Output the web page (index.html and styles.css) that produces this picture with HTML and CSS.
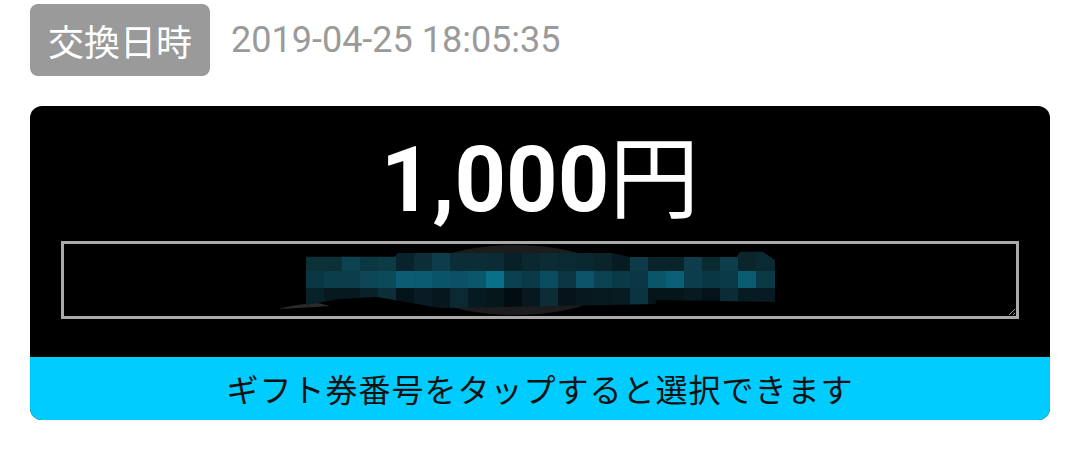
FILE: index.html
```html
<!DOCTYPE html>
<html lang="ja">
<head>
<meta charset="utf-8">
<title>ギフト券</title>
<link rel="stylesheet" href="styles.css">
</head>
<body>
<div class="page">
  <div class="meta">
    <span class="tag">交換日時</span>
    <span class="date">2019-04-25 18:05:35</span>
  </div>
  <div class="card">
    <div class="amount">1,000<span class="yen">円</span></div>
    <div class="code-box">
      <svg class="mosaic" viewBox="64 244 952 72" width="952" height="72" xmlns="http://www.w3.org/2000/svg">
        <defs>
          <clipPath id="blob">
            <polygon points="306,256.7 395,256.7 398,253 612,253 630,257 737,257 740,251.7 763,251.7 775,260 775,302 657,300 655,304 610,305 440,308 377,297 340,299 306,305"/>
          </clipPath>
        </defs>
        <ellipse cx="515" cy="280" rx="100" ry="35" fill="#1c1c1c"/>
        <path d="M278 309 Q296 304 318 303 L330 306 Q300 308 278 309 Z" fill="#2a2a2a"/>
        <g clip-path="url(#blob)" shape-rendering="crispEdges">
          <g transform="translate(306 0) scale(18 1)">
            <rect x="0" y="248" width="1.05" height="22.7" fill="#0b3038"/>
            <rect x="1" y="248" width="1.05" height="22.7" fill="#0b3038"/>
            <rect x="2" y="248" width="1.05" height="22.7" fill="#0d4250"/>
            <rect x="3" y="248" width="1.05" height="22.7" fill="#0b3742"/>
            <rect x="4" y="248" width="1.05" height="22.7" fill="#0c3a45"/>
            <rect x="5" y="248" width="1.05" height="22.7" fill="#08232b"/>
            <rect x="6" y="248" width="1.05" height="22.7" fill="#0b2e38"/>
            <rect x="7" y="248" width="1.05" height="22.7" fill="#0d3d4a"/>
            <rect x="8" y="248" width="1.05" height="22.7" fill="#0b2d37"/>
            <rect x="9" y="248" width="1.05" height="22.7" fill="#0b2d37"/>
            <rect x="10" y="248" width="1.05" height="22.7" fill="#0b2c36"/>
            <rect x="11" y="248" width="1.05" height="22.7" fill="#082128"/>
            <rect x="12" y="248" width="1.05" height="22.7" fill="#0a2830"/>
            <rect x="13" y="248" width="1.05" height="22.7" fill="#0b2c35"/>
            <rect x="14" y="248" width="1.05" height="22.7" fill="#0a2a33"/>
            <rect x="15" y="248" width="1.05" height="22.7" fill="#0a2830"/>
            <rect x="16" y="248" width="1.05" height="22.7" fill="#0a2429"/>
            <rect x="17" y="248" width="1.05" height="22.7" fill="#061c22"/>
            <rect x="18" y="248" width="1.05" height="22.7" fill="#0c3a46"/>
            <rect x="19" y="248" width="1.05" height="22.7" fill="#08232a"/>
            <rect x="20" y="248" width="1.05" height="22.7" fill="#08232a"/>
            <rect x="21" y="248" width="1.05" height="22.7" fill="#0d3d4a"/>
            <rect x="22" y="248" width="1.05" height="22.7" fill="#0a2a32"/>
            <rect x="23" y="248" width="1.05" height="22.7" fill="#0e3e4b"/>
            <rect x="24" y="248" width="1.05" height="22.7" fill="#0a252c"/>
            <rect x="25" y="248" width="1.05" height="22.7" fill="#0a2a33"/>
            <rect x="26" y="248" width="1.05" height="22.7" fill="#0a2a33"/>

            <rect x="0" y="270.7" width="1.05" height="17.7" fill="#0a3744"/>
            <rect x="1" y="270.7" width="1.05" height="17.7" fill="#0b3e4b"/>
            <rect x="2" y="270.7" width="1.05" height="17.7" fill="#0b3d4a"/>
            <rect x="3" y="270.7" width="1.05" height="17.7" fill="#0c4657"/>
            <rect x="4" y="270.7" width="1.05" height="17.7" fill="#0c4a5a"/>
            <rect x="5" y="270.7" width="1.05" height="17.7" fill="#0a5d73"/>
            <rect x="6" y="270.7" width="1.05" height="17.7" fill="#0a5b71"/>
            <rect x="7" y="270.7" width="1.05" height="17.7" fill="#0a5468"/>
            <rect x="8" y="270.7" width="1.05" height="17.7" fill="#0b5064"/>
            <rect x="9" y="270.7" width="1.05" height="17.7" fill="#0a566b"/>
            <rect x="10" y="270.7" width="1.05" height="17.7" fill="#0a7089"/>
            <rect x="11" y="270.7" width="1.05" height="17.7" fill="#0a4151"/>
            <rect x="12" y="270.7" width="1.05" height="17.7" fill="#0a3a48"/>
            <rect x="13" y="270.7" width="1.05" height="17.7" fill="#0b4d60"/>
            <rect x="14" y="270.7" width="1.05" height="17.7" fill="#093642"/>
            <rect x="15" y="270.7" width="1.05" height="17.7" fill="#0b5469"/>
            <rect x="16" y="270.7" width="1.05" height="17.7" fill="#0a4252"/>
            <rect x="17" y="270.7" width="1.05" height="17.7" fill="#093a47"/>
            <rect x="18" y="270.7" width="1.05" height="17.7" fill="#0a3644"/>
            <rect x="19" y="270.7" width="1.05" height="17.7" fill="#0a5569"/>
            <rect x="20" y="270.7" width="1.05" height="17.7" fill="#0b5f77"/>
            <rect x="21" y="270.7" width="1.05" height="17.7" fill="#0a3e4c"/>
            <rect x="22" y="270.7" width="1.05" height="17.7" fill="#0a3744"/>
            <rect x="23" y="270.7" width="1.05" height="17.7" fill="#0a3a47"/>
            <rect x="24" y="270.7" width="1.05" height="17.7" fill="#0b5b71"/>
            <rect x="25" y="270.7" width="1.05" height="17.7" fill="#0a3a46"/>
            <rect x="26" y="270.7" width="1.05" height="17.7" fill="#0a3a46"/>

            <rect x="0" y="288.3" width="1.05" height="22" fill="#08222a"/>
            <rect x="1" y="288.3" width="1.05" height="22" fill="#06191f"/>
            <rect x="2" y="288.3" width="1.05" height="22" fill="#06191f"/>
            <rect x="3" y="288.3" width="1.05" height="22" fill="#08212a"/>
            <rect x="4" y="288.3" width="1.05" height="22" fill="#0b2e38"/>
            <rect x="5" y="288.3" width="1.05" height="22" fill="#05141a"/>
            <rect x="6" y="288.3" width="1.05" height="22" fill="#071c23"/>
            <rect x="7" y="288.3" width="1.05" height="22" fill="#06181e"/>
            <rect x="8" y="288.3" width="1.05" height="22" fill="#0a2933"/>
            <rect x="9" y="288.3" width="1.05" height="22" fill="#061b21"/>
            <rect x="10" y="288.3" width="1.05" height="22" fill="#06171c"/>
            <rect x="11" y="288.3" width="1.05" height="22" fill="#030c10"/>
            <rect x="12" y="288.3" width="1.05" height="22" fill="#07191f"/>
            <rect x="13" y="288.3" width="1.05" height="22" fill="#0a2d37"/>
            <rect x="14" y="288.3" width="1.05" height="22" fill="#05141a"/>
            <rect x="15" y="288.3" width="1.05" height="22" fill="#07191f"/>
            <rect x="16" y="288.3" width="1.05" height="22" fill="#061a20"/>
            <rect x="17" y="288.3" width="1.05" height="22" fill="#061c22"/>
            <rect x="18" y="288.3" width="1.05" height="22" fill="#0a3440"/>
            <rect x="19" y="288.3" width="1.05" height="22" fill="#05161b"/>
            <rect x="20" y="288.3" width="1.05" height="22" fill="#05161b"/>
            <rect x="21" y="288.3" width="1.05" height="22" fill="#061a20"/>
            <rect x="22" y="288.3" width="1.05" height="22" fill="#04121a"/>
            <rect x="23" y="288.3" width="1.05" height="22" fill="#0a2c36"/>
            <rect x="24" y="288.3" width="1.05" height="22" fill="#061c22"/>
            <rect x="25" y="288.3" width="1.05" height="22" fill="#071c22"/>
            <rect x="26" y="288.3" width="1.05" height="22" fill="#071c22"/>
          </g>
        </g>
      </svg>
    </div>
    <div class="hint">ギフト券番号をタップすると選択できます</div>
  </div>
</div>
</body>
</html>
```

FILE: styles.css
```css
html, body {
  margin: 0;
  background: #ffffff;
}

.page {
  padding: 4px 30px 0;
}

.meta {
  display: flex;
  align-items: center;
  height: 72px;
}

.tag {
  display: block;
  height: 72px;
  line-height: 72px;
  padding: 0 18px;
  border-radius: 8px;
  background: #9a9a9a;
  color: #ffffff;
  font-family: "Noto Sans CJK JP", sans-serif;
  font-size: 36px;
}

.date {
  margin-left: 21px;
  color: #9a9a9a;
  font-family: Roboto, "Liberation Sans", sans-serif;
  font-size: 36px;
}

.card {
  margin-top: 30px;
  background: #000000;
  border-radius: 12px;
  overflow: hidden;
}

.amount {
  padding-top: 30px;
  height: 90px;
  text-align: center;
  color: #ffffff;
  font-family: Roboto, "Noto Sans CJK JP", sans-serif;
  font-weight: 700;
  font-size: 90px;
  line-height: 90px;
}

.yen {
  font-weight: 400;
}

.code-box {
  display: flex;
  margin: 15px 31px 0;
  height: 72px;
  border: 3px solid #a9a9a9;
  resize: both;
  overflow: hidden;
}

.mosaic {
  display: block;
  flex: none;
}

.hint {
  margin-top: 38px;
  height: 63px;
  line-height: 63px;
  background: #00ccff;
  color: #111111;
  text-align: center;
  font-family: "Noto Sans CJK JP", sans-serif;
  font-size: 32px;
  letter-spacing: 1px;
}
```
